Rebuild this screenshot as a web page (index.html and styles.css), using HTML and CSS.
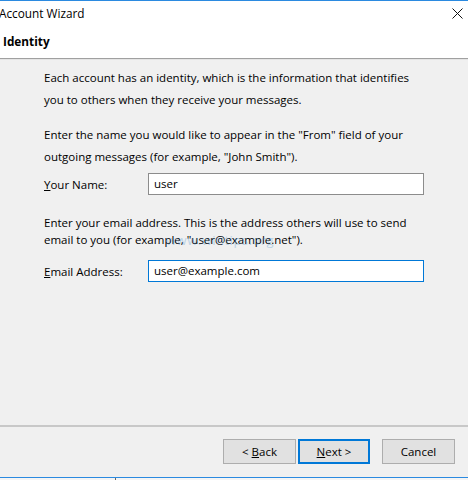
FILE: index.html
```html
<!DOCTYPE html>
<html>
<head>
<meta charset="utf-8">
<link rel="stylesheet" href="styles.css">
</head>
<body>
<div class="window">
  <div class="header">
    <div class="titlebar">
      <span class="title">Account Wizard</span>
      <svg class="close" width="11" height="11" viewBox="0 0 11 11"><path d="M0.5 0.5 L10.5 10.5 M10.5 0.5 L0.5 10.5" stroke="#111" stroke-width="1" fill="none"/></svg>
    </div>
    <div class="page-title">Identity</div>
  </div>
  <div class="content">
    <p class="desc p1">Each account has an identity, which is the information that identifies you to others when they receive your messages.</p>
    <p class="desc p2">Enter the name you would like to appear in the "From" field of your outgoing messages (for example, "John Smith").</p>
    <div class="field f1">
      <label class="label"><u>Y</u>our Name:</label>
      <div class="input">user</div>
    </div>
    <p class="desc p3">Enter your email address. This is the address others will use to send email to you (for example, "user@example.net").</p>
    <div class="field f2">
      <label class="label"><u>E</u>mail Address:</label>
      <div class="input focused">user@example.com</div>
    </div>
    <div class="watermark">www.wintips.org</div>
  </div>
  <div class="footer">
    <button class="btn back">&lt; <u>B</u>ack</button>
    <button class="btn next"><u>N</u>ext &gt;</button>
    <button class="btn cancel">Cancel</button>
  </div>
  <div class="taskbar"><span class="tick"></span></div>
</div>
</body>
</html>
```
FILE: styles.css
```css
* { box-sizing: border-box; }
html, body { margin: 0; padding: 0; }
body {
  width: 468px;
  height: 480px;
  overflow: hidden;
  font-family: "Open Sans", "Noto Sans", sans-serif;
  font-size: 11.5px;
  color: #000;
  background: #f0f0f0;
}
.window {
  width: 468px;
  height: 480px;
  display: flex;
  flex-direction: column;
}
.header {
  background: #fff;
  border-top: 1px solid #2b8ae0;
  border-bottom: 1px solid #a0a0a0;
  height: 59px;
  flex: none;
}
.titlebar {
  height: 24px;
  display: flex;
  align-items: center;
  justify-content: space-between;
  padding: 0 5px 0 0;
}
.title {
  font-size: 11.8px;
  margin-left: -1px;
  line-height: 24px;
}
.close { display: block; margin-top: 1px; }
.page-title {
  font-weight: bold;
  font-size: 11.8px;
  padding: 6px 0 0 3px;
  line-height: 20px;
}
.content {
  flex: 1;
  position: relative;
  border-top: 1px solid #e4e4e4;
  padding: 7px 44px 0 44px;
  display: flex;
  flex-direction: column;
}
.desc {
  margin: 0;
  line-height: 22px;
}
.p2 { margin-top: 13px; }
.p3 { margin-top: 19px; line-height: 17px; }
.field {
  display: flex;
  align-items: center;
  height: 22px;
}
.f1 { margin-top: 5px; }
.f2 { margin-top: 12px; }
.label {
  width: 104px;
  flex: none;
}
.input {
  flex: 1;
  height: 22px;
  background: #fff;
  border: 1px solid #8c8c8c;
  padding: 0 5px;
  line-height: 20px;
}
.input.focused { border-color: #0078d7; }
.watermark {
  position: absolute;
  left: 166px;
  top: 171px;
  font-size: 13px;
  color: #3c8fd0;
  opacity: 0.3;
  letter-spacing: 0.5px;
}
.footer {
  flex: none;
  height: 53px;
  border-top: 2px solid #c8c8c8;
  display: flex;
  justify-content: flex-end;
  padding: 12px 13px 0 0;
  border-bottom: 1px solid #2b8ae0;
}
.btn {
  font-family: inherit;
  font-size: 11.5px;
  height: 25px;
  width: 73px;
  background: #e1e1e1;
  border: 1px solid #adadad;
  padding: 0;
  color: #000;
  line-height: 22px;
}
.back { margin-right: 2px; }
.next { width: 72px; border: 2px solid #0078d7; margin-right: 12px; }
.taskbar {
  flex: none;
  height: 2px;
  background: #f5f5f5;
  position: relative;
}
.tick {
  position: absolute;
  left: 115px;
  top: 0;
  width: 1px;
  height: 2px;
  background: #666;
}
```
